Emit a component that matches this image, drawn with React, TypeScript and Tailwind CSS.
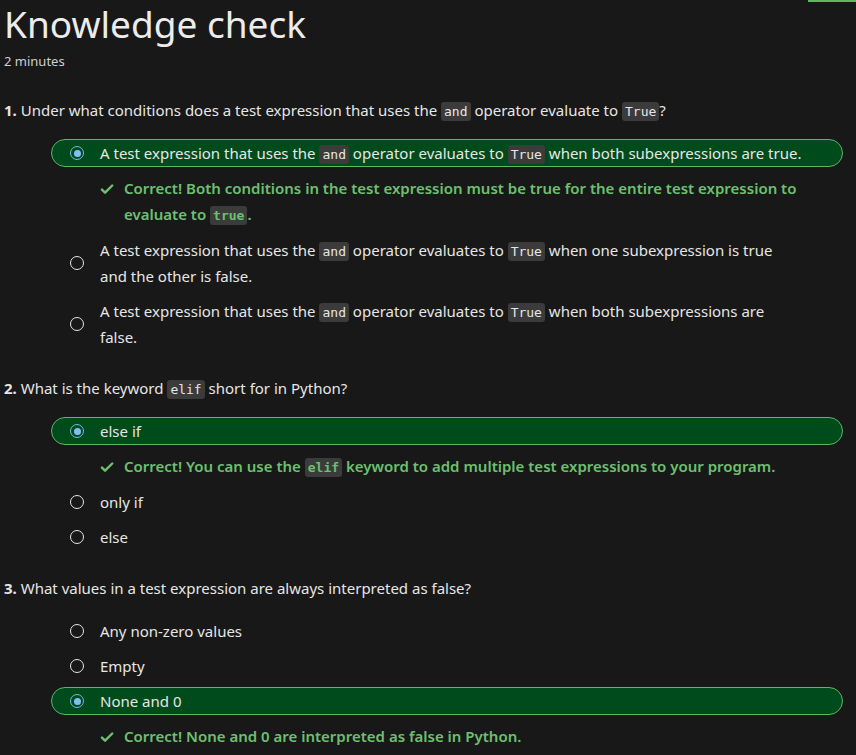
import React from "react";

type Part = string | { code: string } | { br: true };

interface Opt {
  parts: Part[];
  selected?: boolean;
  feedback?: Part[];
}

interface Question {
  n: number;
  parts: Part[];
  options: Opt[];
}

const questions: Question[] = [
  {
    n: 1,
    parts: ["Under what conditions does a test expression that uses the ", { code: "and" }, " operator evaluate to ", { code: "True" }, "?"],
    options: [
      {
        parts: ["A test expression that uses the ", { code: "and" }, " operator evaluates to ", { code: "True" }, " when both subexpressions are true."],
        selected: true,
        feedback: ["Correct! Both conditions in the test expression must be true for the entire test expression to", { br: true }, "evaluate to ", { code: "true" }, "."]
      },
      {
        parts: ["A test expression that uses the ", { code: "and" }, " operator evaluates to ", { code: "True" }, " when one subexpression is true", { br: true }, "and the other is false."]
      },
      {
        parts: ["A test expression that uses the ", { code: "and" }, " operator evaluates to ", { code: "True" }, " when both subexpressions are", { br: true }, "false."]
      }
    ]
  },
  {
    n: 2,
    parts: ["What is the keyword ", { code: "elif" }, " short for in Python?"],
    options: [
      {
        parts: ["else if"],
        selected: true,
        feedback: ["Correct! You can use the ", { code: "elif" }, " keyword to add multiple test expressions to your program."]
      },
      { parts: ["only if"] },
      { parts: ["else"] }
    ]
  },
  {
    n: 3,
    parts: ["What values in a test expression are always interpreted as false?"],
    options: [
      { parts: ["Any non-zero values"] },
      { parts: ["Empty"] },
      {
        parts: ["None and 0"],
        selected: true,
        feedback: ["Correct! None and 0 are interpreted as false in Python."]
      }
    ]
  }
];

function Rich({ parts, feedback }: { parts: Part[]; feedback?: boolean }) {
  return (
    <>
      {parts.map((p, i) => {
        if (typeof p === "string") return <React.Fragment key={i}>{p}</React.Fragment>;
        if ("br" in p) return <br key={i} />;
        return (
          <code
            key={i}
            className={`rounded-[3px] bg-[#3b3b3b] px-[3px] py-[2px] font-['DejaVu_Sans_Mono',monospace] text-[13px] leading-[16px] ${feedback ? "font-bold text-[#6cc070]" : "text-[#e6e6e6]"}`}
          >
            {p.code}
          </code>
        );
      })}
    </>
  );
}

function Radio({ checked }: { checked?: boolean }) {
  return checked ? (
    <span className="flex h-[14px] w-[14px] shrink-0 items-center justify-center rounded-full border-[1.5px] border-[#75b6e7]">
      <span className="h-[7px] w-[7px] rounded-full bg-[#7fc0f0]"></span>
    </span>
  ) : (
    <span className="h-[14px] w-[14px] shrink-0 rounded-full border-[1.5px] border-[#e6e6e6]"></span>
  );
}

function Option({ opt }: { opt: Opt }) {
  return (
    <div className="flex flex-col gap-[8px]">
      <div
        className={`ml-[47px] mr-[9px] flex items-center rounded-full border pl-[18px] pr-4 ${opt.selected ? "border-[#5fb563] bg-[#004b1c]" : "border-transparent"}`}
      >
        <Radio checked={opt.selected} />
        <div className="ml-[16px] whitespace-nowrap leading-[26px]">
          <Rich parts={opt.parts} />
        </div>
      </div>
      {opt.feedback && (
        <div className="mb-[2px] ml-[96px] flex font-semibold leading-[26px] text-[#6cc070]">
          <svg viewBox="0 0 16 16" className="mr-[10px] mt-[7px] h-[14px] w-[14px] shrink-0" fill="none" stroke="#6cc070" strokeWidth="2.8" strokeLinecap="round" strokeLinejoin="round">
            <path d="M2.2 8.6l3.6 3.6L14 4" />
          </svg>
          <div className="whitespace-nowrap">
            <Rich parts={opt.feedback} feedback />
          </div>
        </div>
      )}
    </div>
  );
}

export default function App() {
  return (
    <div className="relative min-h-[755px] overflow-hidden bg-[#181818] px-[4px] font-['Noto_Sans',sans-serif] text-[15px] text-[#e6e6e6]">
      <div className="absolute right-0 top-0 h-[2px] w-[48px] bg-[#5fb563]"></div>
      <h1 className="text-[37px] leading-[48px] text-[#ececec]">Knowledge check</h1>
      <p className="mt-[3px] text-[13px] leading-[20px] text-[#cfcfcf]">2 minutes</p>
      <div className="mt-[26px] flex flex-col gap-[24px]">
        {questions.map((q) => (
          <div key={q.n} className="flex flex-col">
            <p className="leading-[26px]">
              <span className="font-bold">{q.n}.</span> <Rich parts={q.parts} />
            </p>
            <div className="mt-[16px] flex flex-col gap-[7px]">
              {q.options.map((o, i) => (
                <Option key={i} opt={o} />
              ))}
            </div>
          </div>
        ))}
      </div>
    </div>
  );
}
